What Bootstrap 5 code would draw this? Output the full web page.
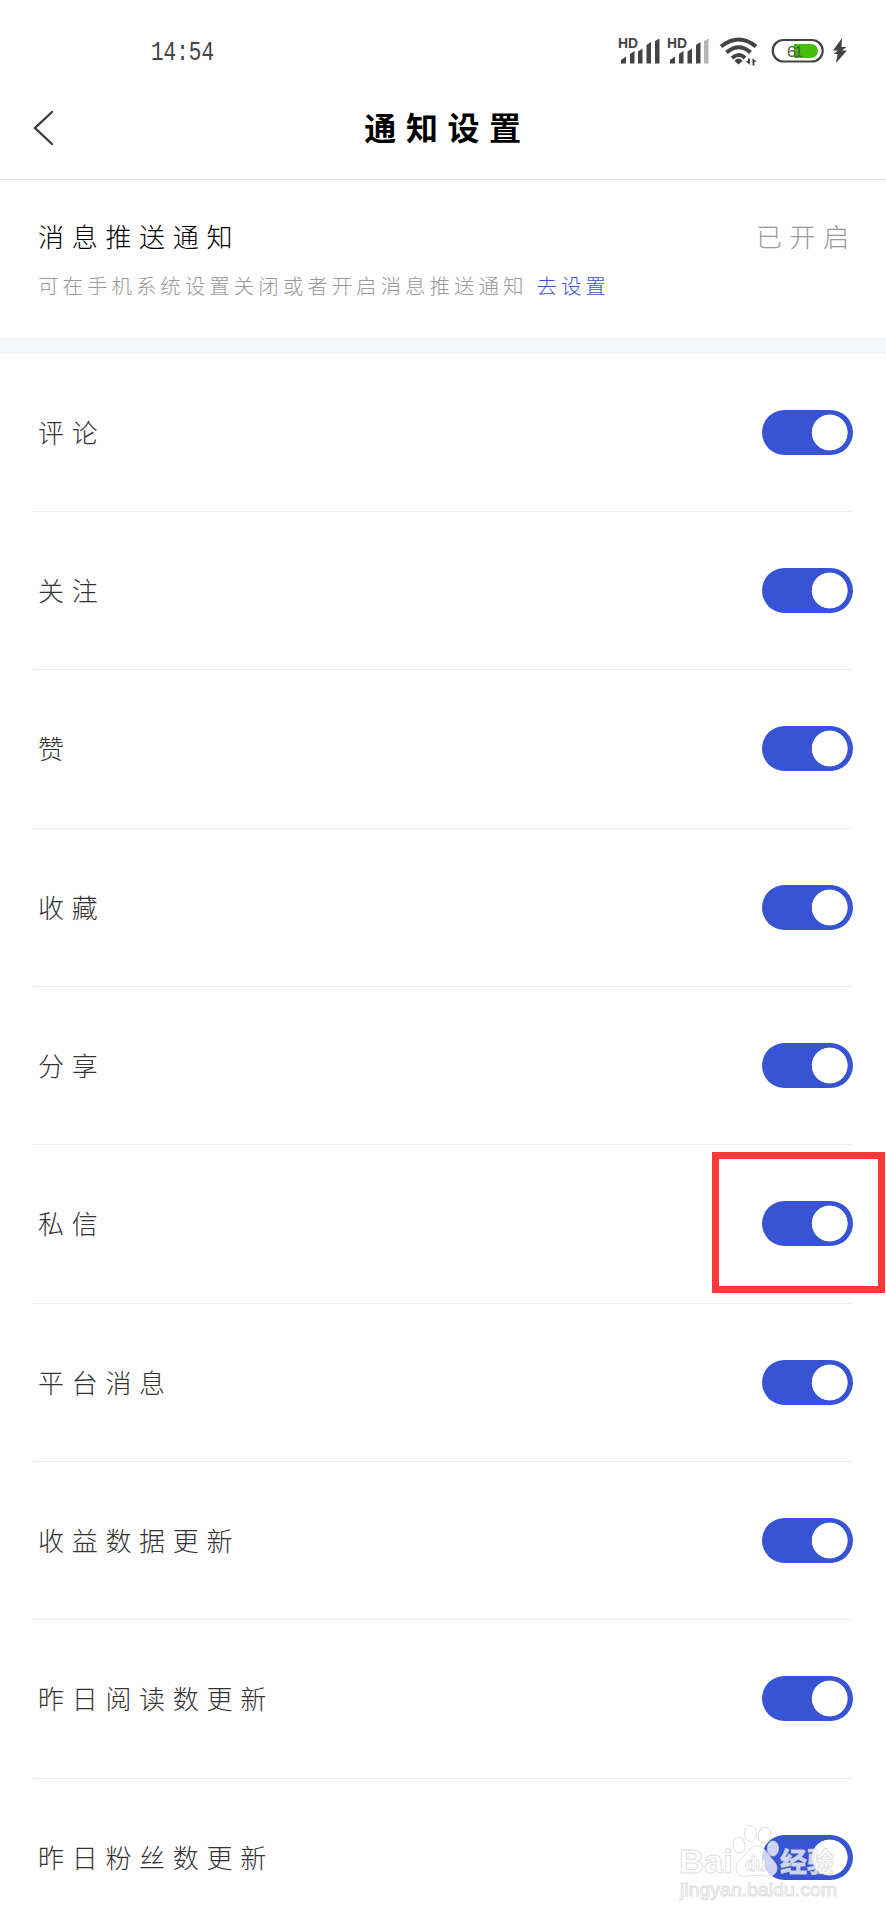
<!DOCTYPE html>
<html lang="zh-CN">
<head>
<meta charset="utf-8">
<meta name="viewport" content="width=device-width, initial-scale=1">
<title>通知设置</title>
<link href="https://cdn.jsdelivr.net/npm/bootstrap@5.3.0/dist/css/bootstrap.min.css" rel="stylesheet">
<style>
  body { font-family: "Noto Sans CJK SC", sans-serif; font-weight: 300; background: #fefefe; color: #333; }
  .screen { width: 886px; height: 1920px; }
  .status-bar { height: 76px; padding: 26px 37px 0 151px; }
  .clock { font: 28px/53px "Liberation Mono", monospace; color: #444; transform: scaleX(.75); transform-origin: 0 50%; }
  .title-bar { height: 104px; border-bottom: 1.5px solid #e8e8e8; padding: 0 33px; }
  .title-bar h1 { font-size: 32px; line-height: 40px; letter-spacing: 9.6px; color: #000; padding: 0 0 4px 9px; }
  .back { width: 20px; }
  .push { height: 158px; padding: 37px 29px 0 38px; }
  .push-name, .push-state, .row-name { font-size: 26px; line-height: 38px; letter-spacing: 7.7px; }
  .row-name { margin-top: -1px; }
  .push-name { color: #000; }
  .push-state { color: #999; }
  .push-hint { font-size: 20.5px; line-height: 30px; letter-spacing: 3.97px; color: #999; margin-top: 15px; }
  .push-hint a { color: #3854d4; margin-left: 9px; }
  .band { height: 15.6px; background: #f6f7f9; }
  .options { padding: 0 33px; }
  .option { height: 158.33px; flex: none; border-bottom: 1.5px solid #ededed; padding-left: 5px; }
  .option .form-switch { min-height: 0; }
  .option .form-check-input { width: 91px; height: 45px; border: 0; box-shadow: none;
    background: #3854d4 radial-gradient(circle at 67.7px 22.5px, #fff 17.5px, transparent 18.3px); }
  .marked { position: relative; }
  .marked::after { content: ""; position: absolute; right: -32px; top: 7px; width: 173px; height: 141px; border: 7px solid #fc3838; }
  .watermark { right: 40px; bottom: 12px; }
</style>
</head>
<body>
<div class="screen position-relative overflow-hidden">
  <header>
    <div class="status-bar d-flex justify-content-between align-items-start">
      <span class="clock">14:54</span>
      <svg width="232" height="50" viewBox="616 26 232 50" fill="#434343">
        <g font-family="Liberation Sans" font-size="14" font-weight="700">
          <text x="617" y="47.500" textLength="20" lengthAdjust="spacingAndGlyphs">HD</text>
          <text x="666" y="47.500" textLength="20" lengthAdjust="spacingAndGlyphs">HD</text>
        </g>
        <g>
          <path d="M620 60l5-3.500v7h-5zM629 54l4.500-3v12.500H629zM637 51.500l4.500-3v15H637zM645.500 45l4.500-3v21.500h-4.500zM654 41l4.500-2.500v25H654z"/>
          <path d="M669 60l5-3.500v7h-5zM678 54l4.500-3v12.500H678zM686.500 51.500l4.500-3v15h-4.500zM695 45l4.500-3v21.500H695z"/>
          <path d="M703 41l4.500-2.500v25H703z" fill="#b5b5b5"/>
        </g>
        <g fill="none" stroke="#434343" stroke-width="4">
          <path d="M720 46.500Q738 32.500 755 46.500"/>
          <path d="M725.500 52.500Q738 42 749.500 52.500"/>
          <path d="M731 58Q738 52 744 58"/>
        </g>
        <path d="M737.500 58.500q3 0 4 2.500l-4 3.500-4-3.500q1-2.500 4-2.500z"/>
        <path d="M747 58.500h1.900v6.500l-4.400-4h2.500zM751.500 65.500h1.900V62h2.200l-4.100-4z"/>
        <rect x="771.700" y="40" width="50" height="21.500" rx="10.700" fill="#fff" stroke="#434343" stroke-width="2.200"/>
        <path d="M793 44h17a7 7 0 0 1 0 14h-17z" fill="#46bd0b"/>
        <text x="785.500" y="57" font-family="Liberation Mono" font-size="17" textLength="17" fill="#4b624b">61</text>
        <path d="M841 38l-9 12.500h5l-4.500 3.500h4l-1.500 9 11-12.500h-5l4.500-3.500h-5z"/>
      </svg>
    </div>
    <div class="title-bar d-flex align-items-center justify-content-between">
      <svg class="back" height="36" viewBox="0 0 20 36" fill="none" stroke="#3d3d3d" stroke-width="2.400" stroke-linecap="round"><path d="M19 2L2 18 19 34"/></svg>
      <h1 class="m-0 fw-bold">通知设置</h1>
      <span class="back"></span>
    </div>
  </header>

  <section class="push">
    <div class="d-flex justify-content-between">
      <span class="push-name">消息推送通知</span>
      <span class="push-state">已开启</span>
    </div>
    <p class="push-hint mb-0 text-nowrap">可在手机系统设置关闭或者开启消息推送通知<a class="text-decoration-none" href="#">去设置</a></p>
  </section>
  <div class="band"></div>

  <main class="options d-flex flex-column">
    <div class="option d-flex align-items-center justify-content-between"><label class="row-name" for="s1">评论</label><div class="form-check form-switch m-0 p-0"><input class="form-check-input m-0 d-block" type="checkbox" role="switch" id="s1" checked></div></div>
    <div class="option d-flex align-items-center justify-content-between"><label class="row-name" for="s2">关注</label><div class="form-check form-switch m-0 p-0"><input class="form-check-input m-0 d-block" type="checkbox" role="switch" id="s2" checked></div></div>
    <div class="option d-flex align-items-center justify-content-between"><label class="row-name" for="s3">赞</label><div class="form-check form-switch m-0 p-0"><input class="form-check-input m-0 d-block" type="checkbox" role="switch" id="s3" checked></div></div>
    <div class="option d-flex align-items-center justify-content-between"><label class="row-name" for="s4">收藏</label><div class="form-check form-switch m-0 p-0"><input class="form-check-input m-0 d-block" type="checkbox" role="switch" id="s4" checked></div></div>
    <div class="option d-flex align-items-center justify-content-between"><label class="row-name" for="s5">分享</label><div class="form-check form-switch m-0 p-0"><input class="form-check-input m-0 d-block" type="checkbox" role="switch" id="s5" checked></div></div>
    <div class="option marked d-flex align-items-center justify-content-between"><label class="row-name" for="s6">私信</label><div class="form-check form-switch m-0 p-0"><input class="form-check-input m-0 d-block" type="checkbox" role="switch" id="s6" checked></div></div>
    <div class="option d-flex align-items-center justify-content-between"><label class="row-name" for="s7">平台消息</label><div class="form-check form-switch m-0 p-0"><input class="form-check-input m-0 d-block" type="checkbox" role="switch" id="s7" checked></div></div>
    <div class="option d-flex align-items-center justify-content-between"><label class="row-name" for="s8">收益数据更新</label><div class="form-check form-switch m-0 p-0"><input class="form-check-input m-0 d-block" type="checkbox" role="switch" id="s8" checked></div></div>
    <div class="option d-flex align-items-center justify-content-between"><label class="row-name" for="s9">昨日阅读数更新</label><div class="form-check form-switch m-0 p-0"><input class="form-check-input m-0 d-block" type="checkbox" role="switch" id="s9" checked></div></div>
    <div class="option d-flex align-items-center justify-content-between"><label class="row-name" for="s10">昨日粉丝数更新</label><div class="form-check form-switch m-0 p-0"><input class="form-check-input m-0 d-block" type="checkbox" role="switch" id="s10" checked></div></div>
  </main>

  <svg class="watermark position-absolute" width="170" height="88" viewBox="676 1820 170 88" fill="#fff" fill-opacity=".75" stroke="#d8d8d8" stroke-opacity=".8" stroke-width="1">
    <ellipse cx="739" cy="1845" rx="6" ry="8" transform="rotate(-12 739 1845)"/>
    <ellipse cx="750.500" cy="1833.500" rx="6" ry="8"/>
    <ellipse cx="764.500" cy="1835" rx="6" ry="8" transform="rotate(12 764.500 1835)"/>
    <ellipse cx="773" cy="1848.500" rx="5.500" ry="7.500"/>
    <path d="M757 1846c-6 0-9 5-12 9-4 5-9 7-9 13 0 7 6 9 12 8 6-1 12-1 18 0 6 1 11-2 11-8 0-5-5-8-8-13-3-4-6-9-12-9z"/>
    <g font-family="Liberation Sans" font-weight="700">
      <text x="679" y="1873" font-size="34" textLength="54" lengthAdjust="spacingAndGlyphs">Bai</text>
      <text x="745" y="1871" font-size="21" textLength="21" lengthAdjust="spacingAndGlyphs">du</text>
    </g>
    <text x="780" y="1872" font-family="Noto Sans CJK SC" font-weight="700" font-size="27" textLength="54">经验</text>
    <text x="680" y="1896" font-family="Liberation Sans" font-size="18.500" textLength="157" lengthAdjust="spacingAndGlyphs">jingyan.baidu.com</text>
  </svg>
</div>
<script src="https://cdn.jsdelivr.net/npm/bootstrap@5.3.0/dist/js/bootstrap.bundle.min.js"></script>
</body>
</html>
